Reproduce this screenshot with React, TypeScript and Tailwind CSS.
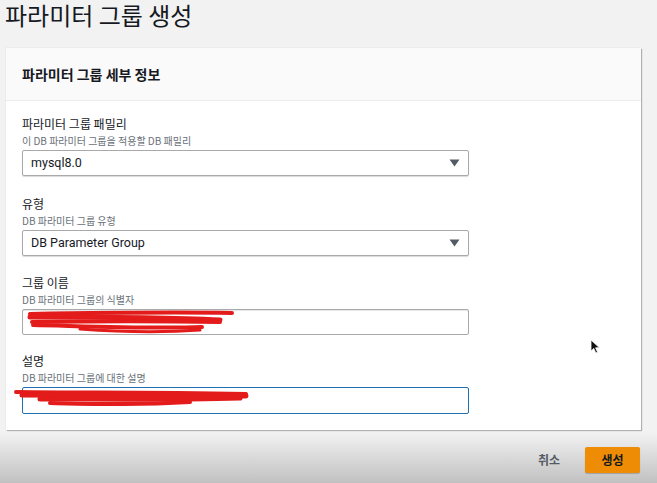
import React from "react";

const font = { fontFamily: '"Noto Sans CJK KR", "Noto Sans", sans-serif' };
const latin = { fontFamily: 'Roboto, "Noto Sans CJK KR", sans-serif' };

function Arrow() {
  return (
    <svg width="11" height="8" viewBox="0 0 11 8" className="shrink-0">
      <path d="M0.5 0.5 H10.5 L5.5 7.5 Z" fill="#545b64" />
    </svg>
  );
}

function Field({
  label,
  desc,
  children,
  gap,
}: {
  label: string;
  desc: string;
  children: React.ReactNode;
  gap: string;
}) {
  return (
    <div className={gap}>
      <div className="text-[12px] leading-[16px] text-[#16191f]">{label}</div>
      <div className="mt-[2px] text-[10px] leading-[14px] text-[#687078]">{desc}</div>
      <div className="mt-[2px]">{children}</div>
    </div>
  );
}

function Select({ value }: { value: string }) {
  return (
    <div className="flex h-[26px] w-[447px] items-center justify-between rounded-[2px] border border-[#a9a9a9] bg-white pl-[8px] pr-[8px] shadow-[0_1px_1px_rgba(0,0,0,0.15)]">
      <span className="text-[12.5px] text-[#16191f]" style={latin}>
        {value}
      </span>
      <Arrow />
    </div>
  );
}

export default function App() {
  return (
    <div
      className="relative h-[483px] w-[657px] overflow-hidden bg-[#f2f2f2]"
      style={font}
    >
      <div className="pl-[5px] pt-[1px] text-[24px] leading-[28px] text-[#16191f]">
        파라미터 그룹 생성
      </div>

      <div className="ml-[6px] mt-[19px] w-[635px] bg-white shadow-[1px_1px_1px_rgba(0,0,0,0.25),0_0_1px_rgba(0,0,0,0.15)]">
        <div className="flex h-[53px] items-center border-b border-[#eaeded] bg-[#fafafa] pl-[16px]">
          <span className="text-[14px] font-bold text-[#16191f]">파라미터 그룹 세부 정보</span>
        </div>
        <div className="px-[16px] pb-[16px] pt-[15px]">
          <Field gap="" label="파라미터 그룹 패밀리" desc="이 DB 파라미터 그룹을 적용할 DB 패밀리">
            <Select value="mysql8.0" />
          </Field>
          <Field gap="mt-[20px]" label="유형" desc="DB 파라미터 그룹 유형">
            <Select value="DB Parameter Group" />
          </Field>
          <Field gap="mt-[19px]" label="그룹 이름" desc="DB 파라미터 그룹의 식별자">
            <div className="relative h-[26px] w-[447px] rounded-[2px] border border-[#a9a9a9] bg-white shadow-[inset_0_1px_1px_rgba(0,0,0,0.1)]" />
          </Field>
          <Field gap="mt-[18px]" label="설명" desc="DB 파라미터 그룹에 대한 설명">
            <div className="relative h-[27px] w-[447px] rounded-[2px] border border-[#1f6fb3] bg-white" />
          </Field>
        </div>
      </div>

      <div className="mt-[3px] flex h-[54px] items-center justify-end gap-[25px] bg-gradient-to-b from-[#f2f2f2] to-[#bdbdbd] pr-[17px]">
        <span className="text-[12px] font-bold text-[#545b64]">취소</span>
        <button className="h-[26px] w-[55px] rounded-[2px] bg-[#ef8c06] text-[12px] font-bold text-[#16191f] shadow-[0_1px_1px_rgba(0,0,0,0.2)]">
          생성
        </button>
      </div>

      {/* red redaction scribbles */}
      <svg
        className="pointer-events-none absolute left-0 top-0"
        width="657"
        height="483"
        viewBox="0 0 657 483"
      >
        <g fill="none" stroke="#e31b1b" strokeLinecap="round">
          <path d="M30 314 C90 313 170 312 232 313" strokeWidth="4" />
          <path d="M30 317 C80 317 160 317 220 320" strokeWidth="5" />
          <path d="M32 322 C90 321 170 321 220 322" strokeWidth="4" />
          <path d="M33 325 C80 326 150 329 202 327" strokeWidth="4" />
          <path d="M80 329 C120 332 160 333 200 330" strokeWidth="3" />
          <path d="M16 392 C80 393 140 392 246 394" strokeWidth="4" />
          <path d="M22 395 C90 395 170 396 246 396" strokeWidth="5" />
          <path d="M40 399 C100 399 170 400 240 398" strokeWidth="5" />
          <path d="M50 403 C100 404 140 405 190 402" strokeWidth="4" />
        </g>
      </svg>

      {/* mouse cursor */}
      <svg className="absolute left-[590px] top-[339px]" width="12" height="16" viewBox="0 0 12 16">
        <path d="M1 1 L1 12 L3.8 9.5 L5.8 14 L7.6 13.2 L5.6 8.8 L9.5 8.8 Z" fill="#111" stroke="#fff" strokeWidth="0.8" />
      </svg>
    </div>
  );
}
